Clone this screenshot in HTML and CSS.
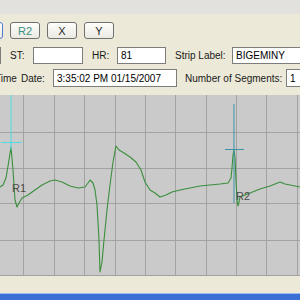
FILE: index.html
```html
<!DOCTYPE html>
<html lang="en">
    <head>
        <meta charset="UTF-8" />
        <title>Strip Editor</title>
        <link rel="stylesheet" href="styles.css" />
    </head>
    <body>
        <div class="window">
            <div class="topbar"></div>
            <div class="panel">
                <div class="toolbar">
                    <button class="tool focused"></button>
                    <button class="tool active">R2</button>
                    <button class="tool">X</button>
                    <button class="tool">Y</button>
                </div>
                <div class="row">
                    <input class="field cut" type="text" value="" />
                    <label class="lbl lbl-st">ST:</label>
                    <input class="field w-st" type="text" value="" />
                    <label class="lbl lbl-hr">HR:</label>
                    <input class="field w-hr" type="text" value="81" />
                    <label class="lbl lbl-strip">Strip Label:</label>
                    <input class="field w-strip" type="text" value="BIGEMINY" />
                </div>
                <div class="row tall">
                    <label class="lbl lbl-time">Time</label>
                    <label class="lbl lbl-date">Date:</label>
                    <input class="field w-date" type="text" value="3:35:02 PM 01/15/2007" />
                    <label class="lbl lbl-seg">Number of Segments:</label>
                    <input class="field w-seg" type="text" value="1" />
                </div>
            </div>
            <div class="chart">
                <svg width="300" height="181" viewBox="0 95 300 181">
                    <g class="grid">
                        <line x1="23.5" y1="95" x2="23.5" y2="276" />
                        <line x1="54.5" y1="95" x2="54.5" y2="276" />
                        <line x1="84.5" y1="95" x2="84.5" y2="276" />
                        <line x1="115.5" y1="95" x2="115.5" y2="276" />
                        <line x1="145.5" y1="95" x2="145.5" y2="276" />
                        <line x1="175.5" y1="95" x2="175.5" y2="276" />
                        <line x1="206.5" y1="95" x2="206.5" y2="276" />
                        <line x1="236.5" y1="95" x2="236.5" y2="276" />
                        <line x1="266.5" y1="95" x2="266.5" y2="276" />
                        <line x1="297.5" y1="95" x2="297.5" y2="276" />
                        <line x1="0" y1="132.5" x2="300" y2="132.5" />
                        <line x1="0" y1="168.5" x2="300" y2="168.5" />
                        <line x1="0" y1="203.5" x2="300" y2="203.5" />
                        <line x1="0" y1="240.5" x2="300" y2="240.5" />
                        <line x1="0" y1="275.5" x2="300" y2="275.5" />
                    </g>
                    <polyline class="trace" points="0,187 3,185 6,178 9,160 11,147 13,170 15,200 17,207 19,203 22,198 28,195 35,190 42,185 50,181 55,180 62,182 70,186 78,188 85,187 88,183 90,180 93,183 95,190 97,205 99,240 100,272 102,262 104,240 107,210 110,185 113,162 116,146 119,150 124,153 130,157 136,162 141,170 145,182 150,190 155,193 160,197 166,195 172,192 180,190 190,188 200,186 210,185 220,184 228,183 231,178 232,168 233,155 234,150 235,158 236,180 237,200 238,206 239,202 240,197 245,195 250,193 260,189 270,186 280,182 285,184 290,185 300,187" />
                    <line class="mark1" x1="11" y1="95" x2="11" y2="150" />
                    <line class="mark1" x1="1" y1="142.5" x2="22" y2="142.5" />
                    <line class="mark2" x1="234" y1="104" x2="234" y2="203" />
                    <line class="mark2" x1="225" y1="149.5" x2="244" y2="149.5" />
                    <text class="rlabel" x="12" y="192">R1</text>
                    <text class="rlabel" x="236" y="200">R2</text>
                </svg>
            </div>
            <div class="status"></div>
            <div class="taskbar"></div>
        </div>
    </body>
</html>
```

FILE: styles.css
```css
body {
    margin: 0px;
    font-family: "Liberation Sans", Arial, sans-serif;
    font-size: 10px;
    overflow: hidden;
}

.window {
    width: 300px;
    height: 300px;
    display: flex;
    flex-direction: column;
    overflow: hidden;
}

.topbar {
    height: 14px;
    flex: 0 0 14px;
    background-color: #e2e1de;
}

.panel {
    flex: 0 0 81px;
    box-sizing: border-box;
    padding-top: 8px;
    background-color: #ece9d8;
    display: flex;
    flex-direction: column;
}

.toolbar {
    display: flex;
    gap: 7px;
    margin-left: -27px;
    height: 17px;
}

.tool {
    width: 30px;
    height: 17px;
    padding: 0px;
    border: 1px solid #707070;
    border-radius: 3px;
    background: linear-gradient(#fefefc, #ebe9e1);
    font-family: "Liberation Sans", Arial, sans-serif;
    font-size: 11px;
    color: #2a2a2a;
}

.tool.focused {
    border-color: #4f7bd0;
}

.tool.active {
    color: #3a8e7e;
}

.row {
    display: flex;
    align-items: center;
    height: 17px;
    margin-top: 8px;
    white-space: nowrap;
}

.row.tall {
    height: 18px;
    margin-top: 5px;
}

.lbl {
    flex: 0 0 auto;
    color: #1a1a1a;
}

.field {
    flex: 0 0 auto;
    box-sizing: border-box;
    height: 100%;
    margin: 0px;
    padding: 0px 3px;
    border: 1px solid #7c7c7c;
    background-color: white;
    font-family: "Liberation Sans", Arial, sans-serif;
    font-size: 10px;
    color: black;
    outline: none;
}

.cut {
    width: 30px;
    margin-left: -29px;
}

.lbl-st {
    margin-left: 9px;
    width: 23px;
}

.w-st {
    width: 50px;
}

.lbl-hr {
    margin-left: 9px;
    width: 25px;
}

.w-hr {
    width: 49px;
}

.lbl-strip {
    margin-left: 9px;
    width: 57px;
}

.w-strip {
    width: 80px;
}

.lbl-time {
    margin-left: -5px;
    width: 26px;
}

.lbl-date {
    width: 32px;
}

.w-date {
    width: 124px;
}

.lbl-seg {
    margin-left: 8px;
    width: 101px;
}

.w-seg {
    width: 30px;
}

.chart {
    flex: 0 0 181px;
    background-color: #cacaca;
}

.chart svg {
    display: block;
}

.grid line {
    stroke: #a2a2a2;
    stroke-width: 1;
}

.trace {
    fill: none;
    stroke: #3a8f3c;
    stroke-width: 1.1;
    stroke-linejoin: round;
}

.mark1 {
    stroke: #4fdbe2;
    stroke-width: 1;
}

.mark2 {
    stroke: #3a93a8;
    stroke-width: 1;
}

.rlabel {
    font-family: "Liberation Sans", Arial, sans-serif;
    font-size: 11px;
    fill: #4a4a4a;
}

.status {
    flex: 0 0 17px;
    background-color: #ece9d8;
}

.taskbar {
    flex: 0 0 7px;
    box-sizing: border-box;
    border-top: 1px solid #9bbcf0;
    background-color: #3b6fd6;
}
```
